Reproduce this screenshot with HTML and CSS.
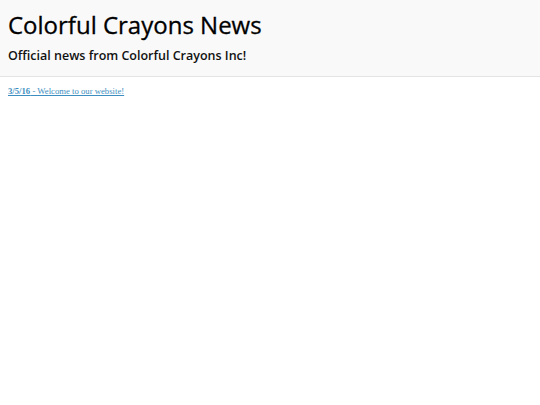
FILE: index.html
```
<!DOCTYPE html>
<html>
<head>
<meta charset="utf-8">
<link rel="stylesheet" href="styles.css">
</head>
<body>
<header class="masthead">
  <h1 class="title">Colorful Crayons News</h1>
  <h2 class="subtitle">Official news from Colorful Crayons Inc!</h2>
</header>
<main class="content">
  <a class="news-link" href="#"><strong>3/5/16</strong> - Welcome to our website!</a>
</main>
</body>
</html>
```
FILE: styles.css
```
html, body {
  margin: 0;
  padding: 0;
  background: #ffffff;
}
.masthead {
  background: #f9f9f9;
  border-bottom: 1px solid #e4e4e4;
  padding: 10px 8px 11px;
  font-family: "Open Sans", sans-serif;
  color: #000;
}
.title {
  margin: 0;
  font-size: 24px;
  font-weight: 400;
  line-height: 30px;
  -webkit-text-stroke: 0.3px #000;
}
.subtitle {
  margin: 7px 0 0;
  font-size: 12.5px;
  font-weight: 600;
  line-height: 18px;
  color: #111;
}
.content {
  padding: 9px 8px;
  font-family: "Liberation Serif", serif;
  font-size: 8.7px;
  line-height: 10px;
}
.news-link {
  color: #3d8ec0;
}
```
